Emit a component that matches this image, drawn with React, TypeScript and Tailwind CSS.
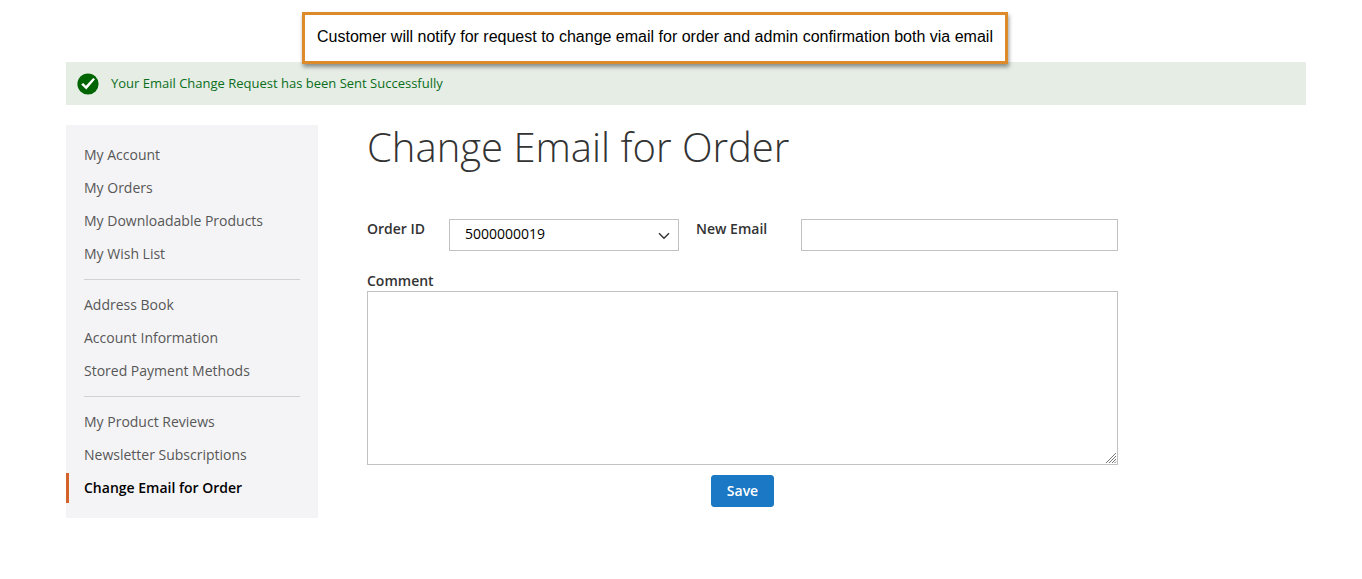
import React from "react";

const navGroups: string[][] = [
  ["My Account", "My Orders", "My Downloadable Products", "My Wish List"],
  ["Address Book", "Account Information", "Stored Payment Methods"],
  ["My Product Reviews", "Newsletter Subscriptions", "Change Email for Order"],
];
const currentItem = "Change Email for Order";

function Callout() {
  return (
    <p className="absolute top-3 left-[302px] flex h-[52px] w-[706px] items-center justify-center border-3 border-[#dc8a2a] bg-white pb-[2px] font-['Liberation_Sans',Arial,sans-serif] text-base whitespace-nowrap text-black shadow-[1px_3px_4px_rgba(0,0,0,0.4)]">
      Customer will notify for request to change email for order and admin confirmation both via email
    </p>
  );
}

function SuccessMessage() {
  return (
    <div role="status" className="flex h-[43px] items-center gap-3 bg-[#e5ede5] px-[11px] text-[13px] leading-4 text-[#0b6e1a]">
      <svg viewBox="0 0 22 22" className="size-[22px] shrink-0" aria-hidden="true">
        <circle cx="11" cy="11" r="10.6" fill="#006400" />
        <path d="M4.2 11.6 L6.2 10.1 L8.9 12.7 L16.2 5 L18 6.2 L9.3 16.4 Z" fill="#fff" />
      </svg>
      <span className="pb-[2px]">Your Email Change Request has been Sent Successfully</span>
    </div>
  );
}

function Sidebar() {
  return (
    <nav aria-label="Account" className="w-[252px] shrink-0 bg-[#f4f4f6] py-[15px]">
      {navGroups.map((group, index) => (
        <React.Fragment key={group[0]}>
          {index > 0 && <hr className="mx-[18px] my-[10px] border-[#d1d1d1]" />}
          <ul className="flex flex-col gap-[3px]">
            {group.map((item) => (
              <li key={item}>
                <a
                  href="#"
                  aria-current={item === currentItem ? "page" : undefined}
                  className={
                    item === currentItem
                      ? "block border-l-3 border-[#d2622a] py-[5px] pr-[18px] pl-[15px] font-semibold text-black"
                      : "block border-l-3 border-transparent py-[5px] pr-[18px] pl-[15px] text-[#575757]"
                  }
                >
                  {item}
                </a>
              </li>
            ))}
          </ul>
        </React.Fragment>
      ))}
    </nav>
  );
}

function EmailForm() {
  return (
    <form className="mt-[51px] max-w-[751px]" onSubmit={(event) => event.preventDefault()}>
      <div className="flex items-start">
        <label htmlFor="order-id" className="w-[82px] shrink-0 font-semibold">
          Order ID
        </label>
        <div className="relative w-[230px] shrink-0">
          <select
            id="order-id"
            className="block h-8 w-full appearance-none rounded-none border border-[#c2c2c2] bg-white pr-8 pb-[2px] pl-[15px] text-black"
          >
            <option>5000000019</option>
          </select>
          <svg viewBox="0 0 12 8" className="pointer-events-none absolute top-[13px] right-[9px] h-2 w-3" fill="none" stroke="#333" strokeWidth="1.4" aria-hidden="true">
            <path d="M1 1.2 L6 6.2 L11 1.2" />
          </svg>
        </div>
        <label htmlFor="new-email" className="ml-[17px] w-[105px] shrink-0 font-semibold">
          New Email
        </label>
        <input id="new-email" type="email" className="h-8 min-w-0 flex-1 border border-[#c2c2c2] bg-white px-2" />
      </div>
      <label htmlFor="comment" className="mt-5 block font-semibold">
        Comment
      </label>
      <div className="relative">
        <textarea
          id="comment"
          className="block h-[174px] w-full resize-none border border-[#c2c2c2] bg-white p-2"
        />
        <svg viewBox="0 0 12 12" className="pointer-events-none absolute right-px bottom-px size-3" fill="none" stroke="#777" strokeWidth="1" aria-hidden="true">
          <path d="M1 11 L11 1 M4 11 L11 4 M7 11 L11 7 M9.5 11 L11 9.5" />
        </svg>
      </div>
      <div className="mt-[10px] flex justify-center">
        <button type="submit" className="h-8 rounded-[3px] border border-[#1979c3] bg-[#1b78c4] px-[15px] font-semibold text-white">
          Save
        </button>
      </div>
    </form>
  );
}

export default function App() {
  return (
    <div className="relative min-h-screen bg-white pt-[62px] pr-14 pb-[61px] pl-[66px] font-['Open_Sans',sans-serif] text-sm leading-5 text-[#333]">
      <div className="mx-auto max-w-[1240px]">
        <SuccessMessage />
        <div className="mt-5 flex items-start gap-[49px]">
          <Sidebar />
          <main className="min-w-0 flex-1">
            <h1 className="text-[40px] leading-[43px] font-light">Change Email for Order</h1>
            <EmailForm />
          </main>
        </div>
      </div>
      <Callout />
    </div>
  );
}
